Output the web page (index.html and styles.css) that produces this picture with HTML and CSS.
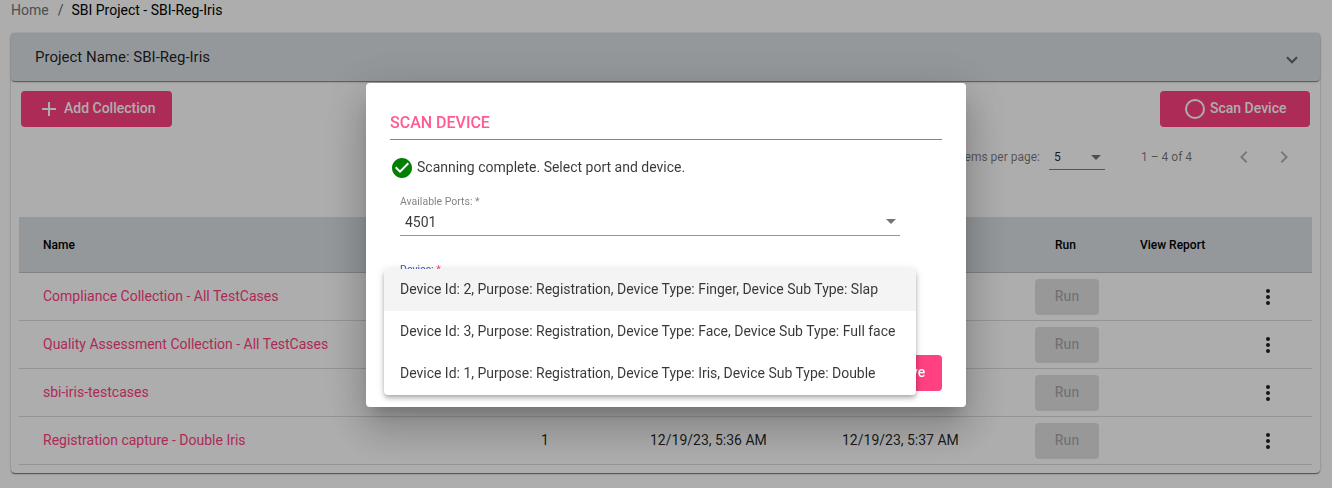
FILE: index.html
```html
<!DOCTYPE html>
<html lang="en">
<head>
<meta charset="utf-8">
<title>SBI Project - SBI-Reg-Iris</title>
<link rel="stylesheet" href="styles.css">
</head>
<body>
<nav class="crumbs"><span class="crumb-home">Home</span><span class="crumb-sep">/</span><span>SBI Project - SBI-Reg-Iris</span></nav>
<main class="card">
  <header class="panel-header"><span>Project Name: SBI-Reg-Iris</span>
    <svg class="chevron" width="12" height="8" viewBox="0 0 12 8"><path d="M1 1.200l5 5 5-5" fill="none" stroke="#666" stroke-width="2.2"/></svg>
  </header>
  <div class="toolbar">
    <button class="btn add"><svg width="14" height="14" viewBox="0 0 14 14"><path d="M7 0v14M0 7h14" stroke="#fff" stroke-width="2"/></svg><span>Add Collection</span></button>
    <button class="btn scan"><svg width="20" height="20" viewBox="0 0 20 20"><circle cx="10" cy="10" r="9" fill="none" stroke="#fff" stroke-width="2"/></svg><span>Scan Device</span></button>
  </div>
  <div class="paginator">
    <span>Items per page:</span>
    <div class="page-size"><span>5</span><i class="caret"></i></div>
    <span class="range">1 – 4 of 4</span>
    <svg class="prev" width="24" height="24" viewBox="0 0 24 24"><path d="M15.410 7.410L14 6l-6 6 6 6 1.410-1.410L10.830 12z"/></svg>
    <svg class="next" width="24" height="24" viewBox="0 0 24 24"><path d="M10 6L8.590 7.410 13.170 12l-4.580 4.590L10 18l6-6z"/></svg>
  </div>
  <section class="table">
    <div class="row head"><span>Name</span><span></span><span></span><span></span><span class="run-head">Run</span><span>View Report</span><span></span></div>
    <div class="row"><a>Compliance Collection - All TestCases</a><span></span><span></span><span></span><button class="run" disabled>Run</button><span></span><svg class="more" viewBox="0 0 24 24"><circle cx="12" cy="6" r="2"/><circle cx="12" cy="12" r="2"/><circle cx="12" cy="18" r="2"/></svg></div>
    <div class="row"><a>Quality Assessment Collection - All TestCases</a><span></span><span></span><span></span><button class="run" disabled>Run</button><span></span><svg class="more" viewBox="0 0 24 24"><circle cx="12" cy="6" r="2"/><circle cx="12" cy="12" r="2"/><circle cx="12" cy="18" r="2"/></svg></div>
    <div class="row"><a>sbi-iris-testcases</a><span></span><span></span><span></span><button class="run" disabled>Run</button><span></span><svg class="more" viewBox="0 0 24 24"><circle cx="12" cy="6" r="2"/><circle cx="12" cy="12" r="2"/><circle cx="12" cy="18" r="2"/></svg></div>
    <div class="row"><a>Registration capture - Double Iris</a><span>1</span><span>12/19/23, 5:36 AM</span><span>12/19/23, 5:37 AM</span><button class="run" disabled>Run</button><span></span><svg class="more" viewBox="0 0 24 24"><circle cx="12" cy="6" r="2"/><circle cx="12" cy="12" r="2"/><circle cx="12" cy="18" r="2"/></svg></div>
  </section>
</main>
<div class="backdrop">
  <div class="dialog">
    <h2 class="dialog-title">SCAN DEVICE</h2>
    <div class="status"><svg width="24" height="24" viewBox="0 0 24 24"><path fill="green" d="M12 2C6.480 2 2 6.480 2 12s4.480 10 10 10 10-4.480 10-10S17.520 2 12 2zm-2 15l-5-5 1.410-1.410L10 14.170l7.590-7.590L19 8l-9 9z"/></svg><span>Scanning complete. Select port and device.</span></div>
    <div class="field"><label>Available Ports: *</label><div class="value"><span>4501</span><i class="caret"></i></div></div>
    <label class="device-label">Device: <b>*</b></label>
    <div class="actions"><button class="btn save">Save</button></div>
    <div class="menu">
      <div class="option active">Device Id: 2, Purpose: Registration, Device Type: Finger, Device Sub Type: Slap</div>
      <div class="option">Device Id: 3, Purpose: Registration, Device Type: Face, Device Sub Type: Full face</div>
      <div class="option">Device Id: 1, Purpose: Registration, Device Type: Iris, Device Sub Type: Double</div>
    </div>
  </div>
</div>
</body>
</html>
```
FILE: styles.css
```css
* { box-sizing: border-box; }
body { margin: 0; height: 488px; overflow: hidden; background: #fff; font: 14px/20px Roboto, sans-serif; color: rgba(0,0,0,.87); }
button { font-family: inherit; border: 0; }
.crumbs { height: 33px; padding-left: 11px; display: flex; line-height: 21px; color: #000; }
.crumb-home { color: #757575; }
.crumb-sep { color: #666; margin: 0 8px 0 9px; }
.card { margin: 0 12px 0 11px; height: 440px; border-radius: 4px; box-shadow: 0 2px 1px -1px rgba(0,0,0,.3), 0 1px 1px rgba(0,0,0,.24), 0 0 1px 0 rgba(0,0,0,.4), 0 1px 3px rgba(0,0,0,.12); }
.panel-header { height: 48px; padding: 0 22px 0 24px; display: flex; align-items: center; justify-content: space-between; font-size: 15px; background: #dae0e4; border-radius: 4px; box-shadow: 0 2px 1px -1px rgba(0,0,0,.3), 0 1px 1px rgba(0,0,0,.2), 0 1px 3px rgba(0,0,0,.12); }
.chevron { margin-top: 6px; }
.toolbar { height: 46px; padding: 10px 10px 0; display: flex; justify-content: space-between; }
.btn { height: 36px; padding: 0; border-radius: 4px; display: flex; align-items: center; background: #ff4081; color: #fff; font-size: 14px; font-weight: 500; line-height: 36px; }
.btn span { margin-top: -2px; }
.add { width: 151px; padding-left: 21px; gap: 8px; }
.scan { width: 150px; padding-left: 25px; gap: 5px; }
.paginator { height: 57px; padding: 2px 24px 0 0; display: flex; align-items: flex-start; justify-content: flex-end; font-size: 12px; line-height: 56px; color: rgba(0,0,0,.54); }
.page-size { margin: 20px 36px 0 9px; width: 56px; height: 21px; padding: 0 4px 0 5px; display: flex; align-items: center; justify-content: space-between; line-height: 16px; color: rgba(0,0,0,.87); border-bottom: 1px solid rgba(0,0,0,.5); padding-bottom: 4px; }
.caret { width: 0; height: 0; border: 5px solid transparent; border-top-color: rgba(0,0,0,.54); border-bottom: 0; }
.range { width: 51px; white-space: nowrap; }
.prev, .next { margin-top: 16px; fill: rgba(0,0,0,.3); }
.prev { margin-left: 40px; }
.next { margin-left: 16px; }
.table { margin: 33px 8px 0; }
.row { height: 48px; padding-left: 24px; display: grid; grid-template-columns: 498px 109px 192px 193px 105px 116px 24px; align-items: center; border-bottom: 1px solid rgba(0,0,0,.14); }
.row:not(.head) > a, .row:not(.head) > span { padding-bottom: 2px; }
.head { height: 56px; background: #dae0e4; font-size: 12px; font-weight: 500; color: #000; }
.run-head { padding-left: 20px; }
.row a { color: #ff4081; }
.run { width: 64px; height: 36px; padding: 0 0 2px; border-radius: 4px; background: rgba(0,0,0,.12); color: rgba(0,0,0,.26); font-size: 14px; font-weight: 500; }
.more { width: 24px; height: 24px; fill: rgba(0,0,0,.87); }
.backdrop { position: fixed; inset: 0; display: flex; align-items: center; justify-content: center; background: rgba(0,0,0,.32); }
.dialog { position: relative; width: 600px; height: 324px; margin-top: 2px; padding: 24px; color: rgba(0,0,0,.78); background: #fff; border-radius: 4px; box-shadow: 0 11px 15px -7px rgba(0,0,0,.2), 0 24px 38px 3px rgba(0,0,0,.14), 0 9px 46px 8px rgba(0,0,0,.12); }
.dialog-title { margin: 0; height: 33px; border-bottom: 1px solid #f0508a; color: #ff5a92; font-size: 16px; line-height: 32px; font-weight: 500; }
.status { height: 24px; margin-top: 16px; display: flex; align-items: center; gap: 3px; }
.status span { padding-bottom: 2px; }
.field { width: 500px; margin: 15px 0 0 10px; }
.field label { display: block; font-size: 10.5px; line-height: 14px; color: rgba(0,0,0,.5); }
.value { height: 27px; padding: 0 4px 1px 5px; display: flex; align-items: center; justify-content: space-between; border-bottom: 1px solid rgba(0,0,0,.42); }
.device-label { display: block; margin: 27px 0 0 10px; font-size: 10.5px; line-height: 14px; color: #3f51b5; }
.device-label b { font-weight: 400; color: #ff4081; }
.actions { margin-top: 78px; display: flex; justify-content: flex-end; }
.save { width: 64px; padding-bottom: 2px; justify-content: center; }
.menu { position: absolute; left: 18px; top: 186px; width: 532px; background: #fff; border-radius: 4px; overflow: hidden; box-shadow: 0 2px 4px -1px rgba(0,0,0,.2), 0 4px 5px rgba(0,0,0,.14), 0 1px 10px rgba(0,0,0,.12); }
.option { height: 42px; padding-left: 16px; line-height: 40px; letter-spacing: -0.01px; white-space: nowrap; }
.active { background: #f4f4f4; }
```
